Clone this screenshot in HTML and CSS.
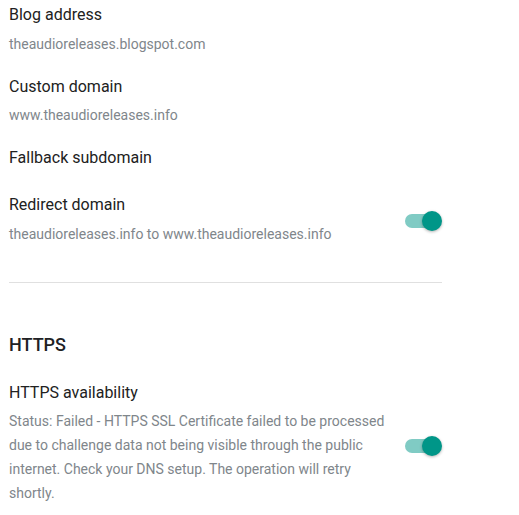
FILE: index.html
```html
<!DOCTYPE html>
<html lang="en">
<head>
<meta charset="utf-8">
<title>Blog settings</title>
<link rel="stylesheet" href="styles.css">
</head>
<body>
<div class="page">
  <section class="group">
    <div class="row">
      <div class="text">
        <div class="title">Blog address</div>
        <div class="sub">theaudioreleases.blogspot.com</div>
      </div>
    </div>
    <div class="row">
      <div class="text">
        <div class="title">Custom domain</div>
        <div class="sub">www.theaudioreleases.info</div>
      </div>
    </div>
    <div class="row">
      <div class="text">
        <div class="title">Fallback subdomain</div>
      </div>
    </div>
    <div class="row">
      <div class="text">
        <div class="title">Redirect domain</div>
        <div class="sub">theaudioreleases.info to www.theaudioreleases.info</div>
      </div>
      <div class="toggle on"><span class="track"></span><span class="thumb"></span></div>
    </div>
  </section>
  <hr class="divider">
  <section class="group">
    <h2 class="heading">HTTPS</h2>
    <div class="row">
      <div class="text">
        <div class="title">HTTPS availability</div>
        <div class="sub">Status: Failed - HTTPS SSL Certificate failed to be processed due to challenge data not being visible through the public internet. Check your DNS setup. The operation will retry shortly.</div>
      </div>
      <div class="toggle on low"><span class="track"></span><span class="thumb"></span></div>
    </div>
  </section>
</div>
</body>
</html>
```
FILE: styles.css
```css
html, body {
  margin: 0;
  padding: 0;
  background: #ffffff;
}
body {
  font-family: Roboto, "Liberation Sans", Arial, sans-serif;
  color: #212121;
}
.page {
  width: 433px;
  padding: 3px 0 0 9px;
}
.group {
  display: flex;
  flex-direction: column;
}
.row {
  display: flex;
  align-items: center;
  justify-content: space-between;
  min-height: 28px;
  margin-bottom: 19px;
}
.text {
  display: flex;
  flex-direction: column;
  align-self: flex-start;
  gap: 4.5px;
  max-width: 378px;
}
.title {
  font-size: 16px;
  line-height: 24px;
  color: #212121;
}
.sub {
  font-size: 14px;
  line-height: 24px;
  color: #80868b;
}
.toggle {
  position: relative;
  width: 37px;
  height: 20px;
  flex: none;
  margin-top: 3px;
}
.toggle.low {
  margin-top: 7px;
}
.track {
  position: absolute;
  left: 0;
  top: 3px;
  width: 34px;
  height: 14px;
  border-radius: 7px;
  background: #80cbc4;
}
.thumb {
  position: absolute;
  right: 0;
  top: 0;
  width: 20px;
  height: 20px;
  border-radius: 50%;
  background: #009688;
  box-shadow: 0 1px 3px rgba(0,0,0,.3);
}
.divider {
  border: 0;
  border-top: 1px solid #e0e0e0;
  margin: 17.5px 0 50px 0;
}
.heading {
  margin: 0 0 23.5px 0;
  font-size: 18px;
  font-weight: 500;
  line-height: 24px;
  color: #202124;
}
```
